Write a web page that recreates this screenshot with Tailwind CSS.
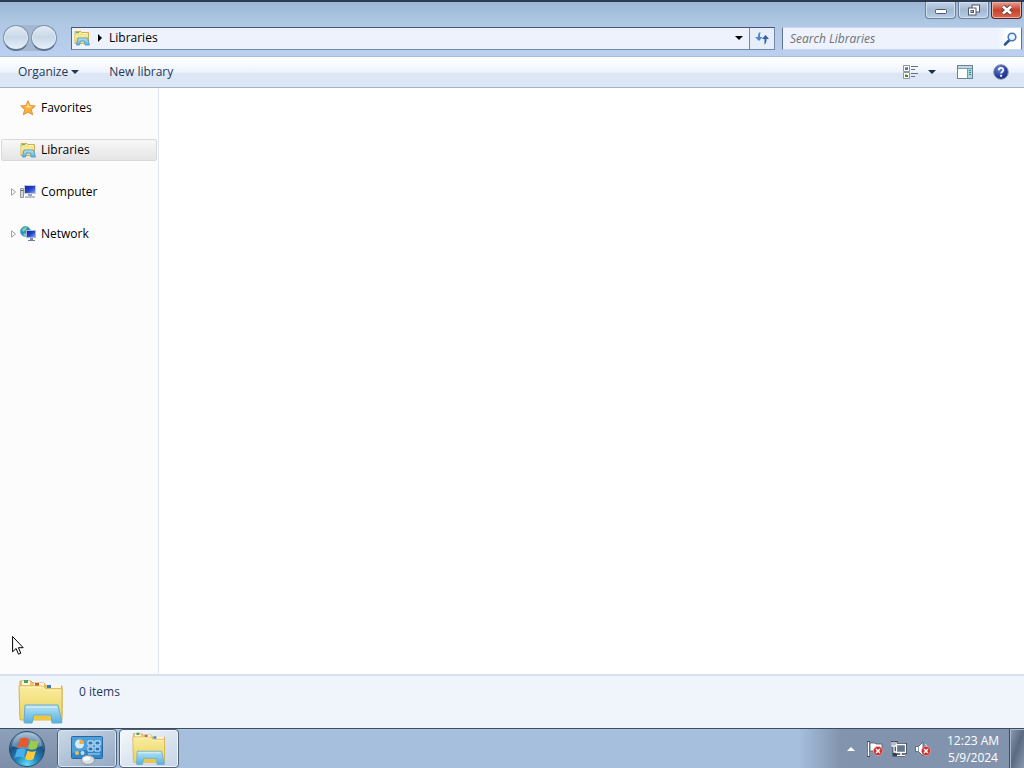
<!DOCTYPE html>
<html lang="en">
<head>
    <meta charset="UTF-8">
    <meta name="viewport" content="width=device-width, initial-scale=1.0">
    <title>Libraries</title>
    <script src="https://cdn.jsdelivr.net/npm/@tailwindcss/browser@4"></script>
</head>
<body class="h-screen flex flex-col overflow-hidden bg-white text-xs text-black font-['Open_Sans','Noto_Sans',sans-serif]">

    <!-- Shared icon artwork -->
    <svg class="absolute w-0 h-0" aria-hidden="true">
        <defs>
            <linearGradient id="folderYellow" x1="0" y1="0" x2="0" y2="1">
                <stop offset="0" stop-color="#f9ec9e"/>
                <stop offset="1" stop-color="#ead35e"/>
            </linearGradient>
            <linearGradient id="standBlue" x1="0" y1="0" x2="0" y2="1">
                <stop offset="0" stop-color="#b9e3f3"/>
                <stop offset="0.5" stop-color="#86cbea"/>
                <stop offset="1" stop-color="#5aaede"/>
            </linearGradient>
            <linearGradient id="screenBlue" x1="0" y1="0" x2="1" y2="1">
                <stop offset="0" stop-color="#1426a0"/>
                <stop offset="0.5" stop-color="#2440cf"/>
                <stop offset="1" stop-color="#7fa4f0"/>
            </linearGradient>
            <radialGradient id="orb" cx="0.5" cy="0.95" r="0.9">
                <stop offset="0" stop-color="#5fe0f5"/>
                <stop offset="0.35" stop-color="#2287bd"/>
                <stop offset="0.7" stop-color="#1c5285"/>
                <stop offset="1" stop-color="#86a9c4"/>
            </radialGradient>
            <radialGradient id="helpBlue" cx="0.4" cy="0.3" r="0.8">
                <stop offset="0" stop-color="#6f86d8"/>
                <stop offset="0.6" stop-color="#26409f"/>
                <stop offset="1" stop-color="#16256b"/>
            </radialGradient>
        </defs>
        <symbol id="folder-lg" viewBox="0 0 46 46">
            <path d="M2 6V2h11l2 2h11l2 3h16v30H2z" fill="#e9c678" stroke="#cfa658"/>
            <path d="M4 2h8v4H4zM16 4h10v4H16zM29 6h14v3H29z" fill="#fff6dc"/>
            <path d="M6 1h4v3H6z" fill="#4aa35c"/>
            <path d="M17 4h4v3h-4z" fill="#cf5533"/>
            <path d="M29 6h4v3h-4z" fill="#3b78c4"/>
            <path d="M1 7h24l3 3h16v31H2z" fill="url(#folderYellow)" stroke="#d8b64a"/>
            <path d="M2 8h23l3 3h15" fill="none" stroke="#fff7c4"/>
            <path d="M7 26h33l4 17q0 1-1 1h-9l-1-8H16l-2 8H7q-1 0-1-1z" fill="url(#standBlue)" stroke="#66abd0"/>
            <path d="M8 28h31" stroke="#dff4fb"/>
            <path d="M17 37h15v4H17z" fill="#efc544"/>
        </symbol>
        <symbol id="folder-sm" viewBox="0 0 16 16">
            <path d="M1 1.500h6l1 1h6.500v11H1z" fill="#f1e38b" stroke="#d0b24c"/>
            <path d="M2 2h3v1H2z" fill="#5fae62"/>
            <path d="M9 3h4v1H9z" fill="#fffbe6"/>
            <path d="M1 5h13v7H1z" fill="url(#folderYellow)"/>
            <path d="M4 8h9.500l2 7H11l-.5-4H6.500l-1 4H2.500z" fill="url(#standBlue)" stroke="#4b96c6" stroke-width="0.800"/>
        </symbol>
        <symbol id="error-badge" viewBox="0 0 10 10">
            <circle cx="5" cy="5" r="4.600" fill="#d0302d" stroke="#f3b5ae" stroke-width="0.600"/>
            <path d="M3 3l4 4M7 3l-4 4" stroke="#fff" stroke-width="1.500"/>
        </symbol>
    </svg>

    <!-- Title bar and address row -->
    <header class="shrink-0 h-14 flex flex-col border-t-2 border-[#2e3a50] bg-linear-to-b from-[#9bb7d6] via-[#afc8e4] via-40% to-[#bccff0]">
        <div class="flex justify-end gap-0.5 h-5 pr-0.5">
            <button type="button" aria-label="Minimize" class="w-[31px] h-[17px] flex items-center justify-center rounded-b-sm border border-t-0 border-[#6c7f9b] bg-linear-to-b from-[#c3d3e8] via-[#a4b8d1] to-[#b6cce8] shadow-[inset_0_0_0_1px_#d3e0f0]">
                <svg class="w-3 h-3" viewBox="0 0 12 12"><rect x="0.500" y="5.500" width="11" height="4" rx="1" fill="#fff" stroke="#4c5870"/></svg>
            </button>
            <button type="button" aria-label="Restore" class="w-[31px] h-[17px] flex items-center justify-center rounded-b-sm border border-t-0 border-[#6c7f9b] bg-linear-to-b from-[#c3d3e8] via-[#a4b8d1] to-[#b6cce8] shadow-[inset_0_0_0_1px_#d3e0f0]">
                <svg class="w-3 h-3" viewBox="0 0 12 12" fill="#fff" stroke="#4c5870"><rect x="4" y="1" width="7.500" height="7"/><rect x="0.500" y="4" width="7.500" height="7"/><rect x="3" y="6.500" width="2.500" height="2" fill="#a4b8d1"/></svg>
            </button>
            <button type="button" aria-label="Close" class="w-[31px] h-[17px] flex items-center justify-center rounded-b-sm border border-t-0 border-[#5a1f22] bg-linear-to-b from-[#e3a093] via-[#c9402a] to-[#d9674d] shadow-[inset_0_0_0_1px_#eeb2a5]">
                <svg class="w-3 h-3" viewBox="0 0 12 12"><path d="M2 2.500l8 7M10 2.500l-8 7" stroke="#5e3a40" stroke-width="4.500"/><path d="M2 2.500l8 7M10 2.500l-8 7" stroke="#fff" stroke-width="2.800"/></svg>
            </button>
        </div>
        <div class="flex items-center h-8 pl-[3px]">
            <div class="flex items-center gap-0.5 mr-3.5 rounded-full bg-[#a3b7d0]">
                <button type="button" aria-label="Back" class="size-[26px] rounded-full border border-[#7f92ab] border-b-2 border-b-[#5f748f] bg-linear-to-b from-[#e2ebf3] via-[#c8d8e7] to-[#e6f2fb] shadow-[inset_0_0_0_1px_#e3edf7]"></button>
                <button type="button" aria-label="Forward" class="size-[26px] rounded-full border border-[#7f92ab] border-b-2 border-b-[#5f748f] bg-linear-to-b from-[#e2ebf3] via-[#c8d8e7] to-[#e6f2fb] shadow-[inset_0_0_0_1px_#e3edf7]"></button>
            </div>
            <nav aria-label="Address" class="flex-1 flex items-center h-[23px] border border-[#7389a8] border-t-[#47566f] border-l-[#56667f] bg-[#edf2fc]">
                <svg class="size-4 ml-0.5"><use href="#folder-sm"/></svg>
                <svg class="w-1 h-2 ml-2" viewBox="0 0 4 8"><path d="M0 0v8L4 4z"/></svg>
                <a href="#" class="ml-[7px]">Libraries</a>
                <button type="button" aria-label="Previous locations" class="ml-auto w-5 h-full flex items-center justify-center">
                    <svg class="w-2 h-1" viewBox="0 0 8 4"><path d="M0 0h8L4 4z"/></svg>
                </button>
                <button type="button" aria-label="Refresh" class="w-[25px] h-full flex items-center justify-center border-l border-[#7389a8] bg-[#e5eefa]">
                    <svg class="size-4" viewBox="0 0 16 16">
                        <path d="M6.500 2C4.500 2.500 4 4 4 7H1l4 4 3.500-4H6c0-2 0-3 .5-5z" fill="#4f86c9"/>
                        <path d="M10.500 14.500c1.500-1 2-2.500 2-5.500H15l-3.500-4L8 9h2.500z" fill="#325f9f"/>
                    </svg>
                </button>
            </nav>
            <form class="relative flex w-60 h-[23px] ml-[7px] mr-0.5" onsubmit="return false">
                <input type="search" aria-label="Search Libraries" placeholder="Search Libraries" class="w-full h-full pl-[7px] pr-7 border border-[#62748f] border-y-[#c9d8ec] bg-linear-to-r from-[#edf2fc] from-90% to-white to-95% italic outline-none placeholder:text-[#6f7276]">
                <button type="submit" aria-label="Search" class="absolute right-1 top-1 size-4">
                    <svg class="size-4" viewBox="0 0 16 16" fill="none"><path d="M7.500 9l-4.500 4.500" stroke="#2d558f" stroke-width="2.500" stroke-linecap="round"/><circle cx="10" cy="6" r="3.800" fill="#e8f4fd" stroke="#4377b5" stroke-width="1.600"/></svg>
                </button>
            </form>
        </div>
    </header>

    <!-- Command bar -->
    <div class="shrink-0 h-8 flex items-center pl-[18px] pr-[15px] border-y border-t-[#a9bcd8] border-b-[#9fb3cd] bg-linear-to-b from-[#fbfdff] from-15% via-[#eef4fc] via-50% to-[#dce6f5] to-55% text-[#1e395b]">
        <button type="button" class="flex items-center gap-[3px]">
            Organize
            <svg class="w-2 h-1" viewBox="0 0 8 4"><path d="M0 0h8L4 4z" fill="#1e395b"/></svg>
        </button>
        <button type="button" class="ml-[30px]">New library</button>
        <button type="button" aria-label="Change your view" class="ml-auto">
            <svg class="size-4" viewBox="0 0 16 16">
                <path d="M1.500 1.500h6v6h-6zM1.500 8.500h6v6h-6z" fill="#fff" stroke="#8a96a4"/>
                <path d="M3 4h3v2H3z" fill="#5179a5"/>
                <path d="M3 3h3v1H3z" fill="#78a869"/>
                <path d="M3 11h3v2H3z" fill="#5b7e28"/>
                <path d="M3 10h2v1H3z" fill="#d8c040"/>
                <path d="M9 2.500h7M9 5.500h4M9 9.500h7M9 12.500h4" stroke="#66727f"/>
            </svg>
        </button>
        <button type="button" aria-label="More view options" class="ml-2.5">
            <svg class="w-2 h-1" viewBox="0 0 8 4"><path d="M0 0h8L4 4z" fill="#1a2b45"/></svg>
        </button>
        <button type="button" aria-label="Show the preview pane" class="ml-[21px]">
            <svg class="size-4" viewBox="0 0 16 16">
                <rect x="0.500" y="1.500" width="15" height="13" fill="#fff" stroke="#6c8296"/>
                <path d="M1 2h14v2H1z" fill="#c3d6e4"/>
                <path d="M10 4h5v10h-5z" fill="#a5dbdf"/>
                <path d="M10.500 4v10M1 4.500h14" stroke="#6d9fab"/>
                <path d="M12 6.500h2M12 8.500h2M12 10.500h2" stroke="#3c8794"/>
            </svg>
        </button>
        <button type="button" aria-label="Get help" class="ml-5">
            <svg class="size-4" viewBox="0 0 16 16">
                <circle cx="8" cy="8" r="7.300" fill="url(#helpBlue)" stroke="#8c98ad"/>
                <path d="M5.800 6.200C5.800 3 10.300 3.200 10.300 5.900 10.300 7.500 8.100 7.600 8.100 9.600" fill="none" stroke="#fff" stroke-width="1.700"/>
                <circle cx="8.100" cy="11.800" r="1.100" fill="#fff"/>
            </svg>
        </button>
    </div>

    <!-- Navigation pane and contents -->
    <main class="flex-1 flex min-h-0">
        <nav aria-label="Folders" class="w-[159px] shrink-0 flex flex-col gap-5 pt-[9px] px-px border-r border-[#dfe6f0] bg-[#fcfcfc]">
            <a href="#" class="flex items-center h-[22px] pl-[19px] gap-[5px]">
                <svg class="size-4" viewBox="0 0 16 16">
                    <path d="M8 .8l2.100 4.700 5.200.5-3.900 3.500 1.200 5.200L8 12l-4.600 2.700 1.200-5.200L.7 6l5.200-.5z" fill="#f9b03c" stroke="#e59038"/>
                    <path d="M8 3l1.200 3.300 3.300.4-4 1L4 6.800l2.700-.4z" fill="#ffe58c"/>
                </svg>
                Favorites
            </a>
            <a href="#" aria-current="page" class="flex items-center h-[22px] pl-[18px] gap-[5px] rounded-xs border border-[#d9d9d9] bg-linear-to-b from-[#f8f8f8] to-[#e5e5e5]">
                <svg class="size-4"><use href="#folder-sm"/></svg>
                Libraries
            </a>
            <a href="#" class="flex items-center h-[22px] pl-2.5 gap-1">
                <svg class="w-[5px] h-2" viewBox="0 0 5 8"><path d="M.5.800v6.400L4.500 4z" fill="#fff" stroke="#a0a0a0"/></svg>
                <svg class="size-4 mr-px" viewBox="0 0 16 16">
                    <path d="M.5 4.500h3v9h-3z" fill="#d6dade" stroke="#8f979f"/>
                    <path d="M1 6.500h2" stroke="#5b6670"/>
                    <path d="M4 1h12v9H4z" fill="#c2cad8"/>
                    <path d="M5 2h10v7H5z" fill="url(#screenBlue)"/>
                    <path d="M8 10h4v2H8z" fill="#9ca6b6"/>
                    <path d="M5 12h10v2H5z" fill="#b9c1cd"/>
                </svg>
                Computer
            </a>
            <a href="#" class="flex items-center h-[22px] pl-2.5 gap-1">
                <svg class="w-[5px] h-2" viewBox="0 0 5 8"><path d="M.5.800v6.400L4.500 4z" fill="#fff" stroke="#a0a0a0"/></svg>
                <svg class="size-4 mr-px" viewBox="0 0 16 16">
                    <circle cx="5.500" cy="5.500" r="5" fill="#2c8fc6" stroke="#5aa9cf"/>
                    <path d="M2 3q2-2 5-2L6 4 3 6zM3 8l3-1 1 3-2 1z" fill="#7fd0a0"/>
                    <path d="M6 4h10v8H6z" fill="#a9b8d0"/>
                    <path d="M7 5h8v6H7z" fill="url(#screenBlue)"/>
                    <path d="M10 12h3v2h-3z" fill="#7c8ca8"/>
                    <path d="M8 14h7v1H8z" fill="#6d7f9e"/>
                </svg>
                Network
            </a>
        </nav>
        <section aria-label="Items" class="flex-1 bg-white"></section>
    </main>

    <!-- Details pane -->
    <footer class="shrink-0 h-[54px] flex items-start gap-[15px] pl-[18px] pt-[3px] border-t-2 border-[#d9dff0] bg-[#f0f5fb] text-[#1e395b]">
        <svg class="size-[46px]"><use href="#folder-lg"/></svg>
        <p class="pt-[5px]">0 items</p>
    </footer>

    <!-- Taskbar -->
    <div class="shrink-0 h-10 flex border-t border-[#3c4a60] bg-[#a5bfdd] shadow-[inset_0_1px_0_#b4c6dc]">
        <button type="button" aria-label="Start" class="w-[57px] flex items-center pl-2 bg-linear-to-b from-[#8da0ba] to-[#7d8ea8]">
            <svg class="size-[38px]" viewBox="0 0 38 38">
                <circle cx="19" cy="19" r="17.500" fill="url(#orb)" stroke="#2d4d70"/>
                <path d="M4 16C6 5 14 2.500 19 2.500S32 5 34 16Q19 22 4 16z" fill="#fff" opacity="0.300"/>
                <path d="M12 9q4-3 9 0l-2.500 9q-4.500-2.500-9 0z" fill="#e8582b"/>
                <path d="M22.500 10q4 2.500 8.500 0l-2.500 8.500q-4.500 2.500-8.500 0z" fill="#9ccb4c"/>
                <path d="M9 19.500q4.500-2.500 9 0l-2.500 8.500q-4-2.500-9 0z" fill="#4aaee8"/>
                <path d="M19.500 20.500q4.500 2.500 8.500 0L25.500 29q-4 2.500-8.500 0z" fill="#fcc93c"/>
            </svg>
        </button>
        <button type="button" aria-label="Control Panel" class="w-[60px] flex items-center justify-center rounded-sm border border-[#4f6079] bg-linear-to-br from-[#ccd9e9] to-[#95a9c3] shadow-[inset_0_0_0_1px_#d8e5f3]">
            <svg class="size-8" viewBox="0 0 32 32">
                <rect x="0.500" y="3.500" width="31" height="22" rx="1" fill="#3187c9" stroke="#2668a5"/>
                <path d="M1 4h30v9L1 20z" fill="#64b1e5" opacity="0.600"/>
                <circle cx="8.500" cy="11" r="4.500" fill="#d7ecf9"/>
                <path d="M8.500 11V6.500A4.500 4.500 0 0 1 13 11z" fill="#f4a93c"/>
                <circle cx="6" cy="20" r="2" fill="#f3bd4c"/>
                <circle cx="11.500" cy="20" r="2" fill="#bfe0f4"/>
                <path d="M17 8h5v4h-5zM24 8h5v4h-5zM17 14h5v4h-5zM24 14h5v4h-5z" fill="#2a76b8" stroke="#d9effb"/>
                <path d="M17 21h12" stroke="#b6daf1"/>
                <ellipse cx="17" cy="27" rx="6.500" ry="4.500" fill="#dbe0e4" stroke="#8c979f"/>
                <ellipse cx="15.500" cy="25.500" rx="3.500" ry="2" fill="#fff"/>
            </svg>
        </button>
        <button type="button" aria-label="Windows Explorer" class="w-[60px] ml-0.5 flex items-center justify-center rounded-sm border border-[#4f6079] bg-linear-to-br from-[#f4f8fc] to-[#c5d4e5] shadow-[inset_0_0_0_1px_#f3f8fd]">
            <svg class="size-[34px]"><use href="#folder-lg"/></svg>
        </button>

        <div class="ml-auto pl-12 pr-2.5 flex items-center text-white bg-linear-to-r from-[#a5bfdd] to-[#8294ad] to-20%">
            <button type="button" aria-label="Show hidden icons">
                <svg class="w-2 h-1" viewBox="0 0 8 4"><path d="M4 0l4 4H0z" fill="#fff"/></svg>
            </button>
            <button type="button" aria-label="Action Center" class="ml-3">
                <svg class="size-4" viewBox="0 0 16 16">
                    <path d="M1.500 0v16" stroke="#3f4c5f" stroke-width="3"/>
                    <path d="M1.500 1v14" stroke="#fff" stroke-width="1.500"/>
                    <path d="M3 2h5l1 1h6v8H8L7 10H3z" fill="#fff" stroke="#4a586c" stroke-width="0.800"/>
                    <use href="#error-badge" x="6" y="5" width="10" height="10"/>
                </svg>
            </button>
            <button type="button" aria-label="Network" class="ml-2">
                <svg class="size-4" viewBox="0 0 16 16">
                    <path d="M5 3.500h10v8H5zM10 12v2M6 14.500h8M1 0v4h4V0M3 1v3M3 5v9h3" fill="none" stroke="#323f52" stroke-width="3"/>
                    <path d="M5.500 3.500h9v8h-9z" fill="#65768d" stroke="#fff" stroke-width="1.300"/>
                    <path d="M10 12v2M6 14.500h8" stroke="#fff" stroke-width="1.500"/>
                    <path d="M1 1v4h4V1M3 1v3M3 5v6h2" fill="none" stroke="#fff" stroke-width="1.300"/>
                </svg>
            </button>
            <button type="button" aria-label="Volume" class="ml-2">
                <svg class="size-4" viewBox="0 0 16 16">
                    <path d="M.5 5.500h3L8 1v14l-4.500-4.500h-3z" fill="#fff" stroke="#4a586c" stroke-width="0.800"/>
                    <path d="M3.500 5.500v5" stroke="#8a98aa"/>
                    <path d="M10 3q2 1 2 3" fill="none" stroke="#dfe6ee"/>
                    <use href="#error-badge" x="6" y="5" width="10" height="10"/>
                </svg>
            </button>
            <time datetime="2024-05-09T00:23" class="ml-4 w-[52px] text-center leading-[17px] whitespace-nowrap">12:23 AM<br>5/9/2024</time>
        </div>
        <button type="button" aria-label="Show desktop" class="w-[15px] border-l border-[#3f4e63] bg-linear-to-br from-[#8d9db2] via-[#5a6a80] to-[#8799b1] shadow-[inset_1px_1px_0_#a9b9cc]"></button>
    </div>

    <!-- Mouse pointer -->
    <svg class="absolute left-3 top-[635px] w-3 h-5 pointer-events-none" viewBox="0 0 12 20" aria-hidden="true">
        <path d="M.6 1.500v15.300l3.500-3.300 2.400 5.700 2.300-1-2.400-5.500h4.800z" fill="#fff" stroke="#000"/>
    </svg>
</body>
</html>
